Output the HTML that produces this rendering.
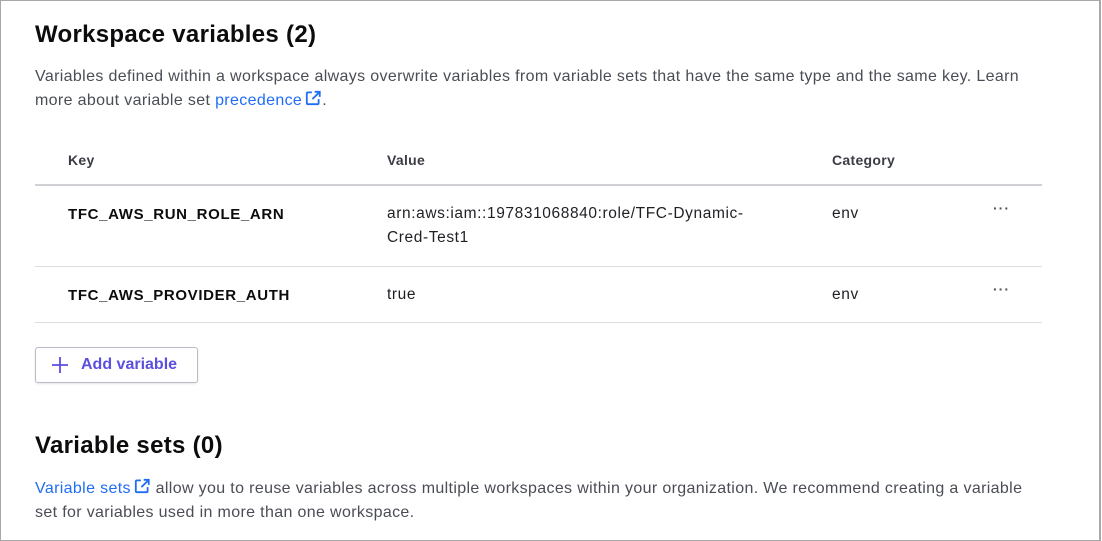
<!DOCTYPE html>
<html><head><style>
body{margin:0;width:1102px;height:541px;background:#fff;font-family:"Liberation Sans",sans-serif;position:relative;overflow:hidden}
.frame{position:absolute;left:0;top:0;width:1098px;height:539px;border:1px solid #a8a8a8;border-right:2px solid #a8a8a8}
.a{position:absolute;white-space:nowrap}
h2{margin:0;font-size:24px;letter-spacing:0.3px;font-weight:bold;color:#0c0c0e;position:absolute}
.p{font-size:16px;letter-spacing:0.35px;color:#4a4d55;line-height:24px}
.link{color:#1f6df5}
.th{font-size:14px;letter-spacing:0.3px;font-weight:bold;color:#3b3d45}
.k{font-size:15px;letter-spacing:0.65px;font-weight:bold;color:#0c0c0e}
.v{font-size:15.5px;letter-spacing:0.6px;color:#1f2024}
.line{position:absolute;left:35px;width:1007px;height:1px;background:#dcdde0}
.dots{font-size:14px;color:#555;letter-spacing:1px;font-weight:bold}
.btn{position:absolute;left:35px;top:347px;width:161px;height:34px;border:1px solid #b8bcc6;border-radius:3px;box-shadow:0 1px 2px rgba(0,0,0,.1)}
</style></head><body>
<div class="frame"></div>
<h2 style="left:35px;top:21px">Workspace variables (2)</h2>
<div class="a p" style="left:35px;top:65px">Variables defined within a workspace always overwrite variables from variable sets that have the same type and the same key. Learn<br>more about variable set <span class="link">precedence<svg width="18" height="18" viewBox="0 0 16 16" style="vertical-align:-2px;margin-left:2px"><path d="M7 3H3.5A1 1 0 0 0 2.5 4v8.5a1 1 0 0 0 1 1H12a1 1 0 0 0 1-1V9M9.5 2.5H14V7M14 2.5L7.5 9" fill="none" stroke="#1f6df5" stroke-width="1.6"/></svg></span>.</div>
<div class="a th" style="left:68px;top:152px">Key</div>
<div class="a th" style="left:387px;top:152px">Value</div>
<div class="a th" style="left:832px;top:152px">Category</div>
<div class="line" style="top:184px;height:2px;background:#cfd1d5"></div>
<div class="a k" style="left:68px;top:206px">TFC_AWS_RUN_ROLE_ARN</div>
<div class="a v" style="left:387px;top:202px;line-height:24px">arn:aws:iam::197831068840:role/TFC-Dynamic-<br>Cred-Test1</div>
<div class="a v" style="left:832px;top:205px">env</div>
<div class="a dots" style="left:993px;top:200px">···</div>
<div class="line" style="top:266px"></div>
<div class="a k" style="left:68px;top:287px">TFC_AWS_PROVIDER_AUTH</div>
<div class="a v" style="left:387px;top:286px">true</div>
<div class="a v" style="left:832px;top:286px">env</div>
<div class="a dots" style="left:993px;top:281px">···</div>
<div class="line" style="top:322px"></div>
<div class="btn"><svg width="20" height="20" viewBox="0 0 20 20" style="position:absolute;left:14px;top:7px"><path d="M10 2v16M2 10h16" stroke="#5b4fe0" stroke-width="1.8"/></svg><span class="a" style="left:45px;top:8px;font-size:16px;font-weight:bold;color:#5b4fe0">Add variable</span></div>
<h2 style="left:35px;top:432px">Variable sets (0)</h2>
<div class="a p" style="left:35px;top:477px"><span class="link">Variable sets<svg width="18" height="18" viewBox="0 0 16 16" style="vertical-align:-2px;margin-left:2px"><path d="M7 3H3.5A1 1 0 0 0 2.5 4v8.5a1 1 0 0 0 1 1H12a1 1 0 0 0 1-1V9M9.5 2.5H14V7M14 2.5L7.5 9" fill="none" stroke="#1f6df5" stroke-width="1.6"/></svg></span> allow you to reuse variables across multiple workspaces within your organization. We recommend creating a variable<br>set for variables used in more than one workspace.</div>
</body></html>
